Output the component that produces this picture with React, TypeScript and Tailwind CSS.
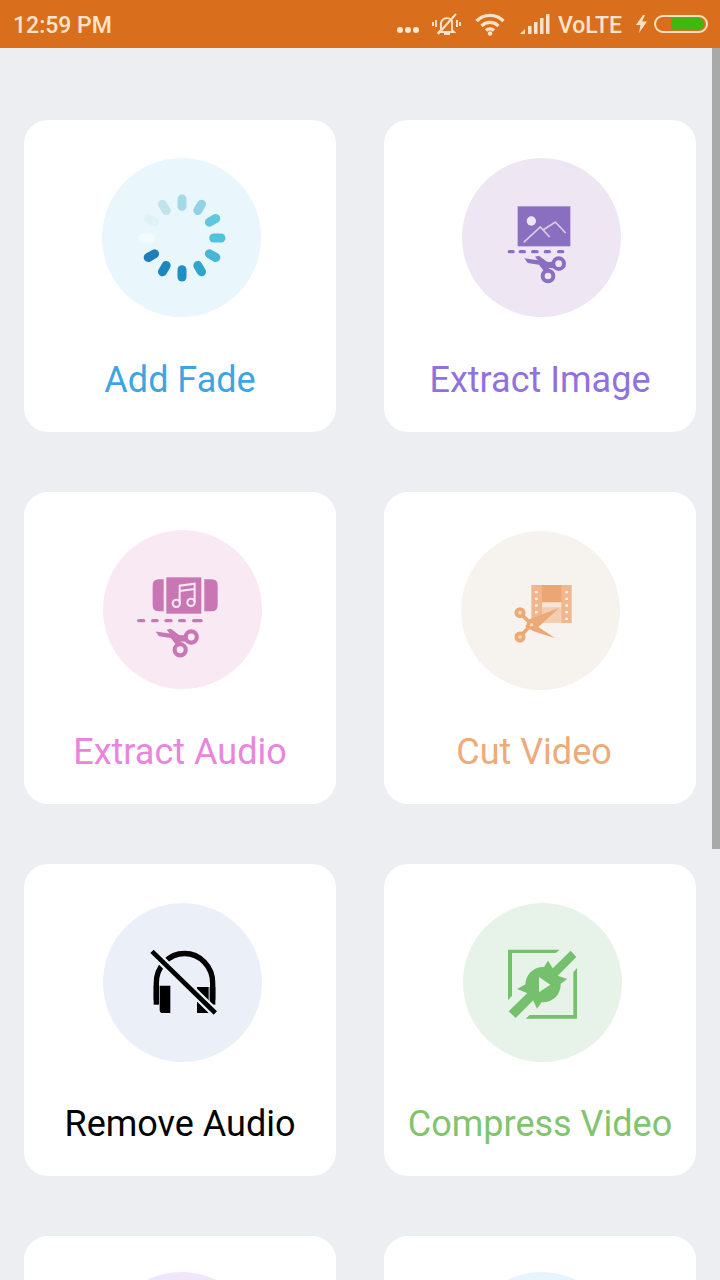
import React from 'react';

const Scissors = ({ fill, transform }: { fill: string; transform?: string }) => (
  <g transform={transform} fill={fill} stroke="none">
    <polygon points="192,309 250,317 272,348 253,350 236,328 202,323" />
    <polygon points="224,304 236,301 260,319 284,321 281,339 250,337" />
    <circle cx="295" cy="325" r="16" fill="none" stroke={fill} strokeWidth="12" />
    <circle cx="263" cy="362" r="16" fill="none" stroke={fill} strokeWidth="12" />
  </g>
);

const Dashes = ({ y, xs, color }: { y: number; xs: number[][]; color: string }) => (
  <g stroke={color} strokeWidth="10" strokeLinecap="round">
    {xs.map(([a, b]) => (
      <line key={a} x1={a} y1={y} x2={b} y2={y} />
    ))}
  </g>
);

// spokes go clockwise from 12 o'clock
const spokeColors = ['#a3dae8', '#90d4e4', '#5fc7de', '#4fc3dc', '#48b7d7', '#2ea6cc', '#1f8fc5', '#1e86bf', '#1f7dbb', '#f3fbfe', '#e1f2f6', '#c0e4eb'];

const FadeIcon = () => (
  <svg viewBox="5 10 477 477" className="w-full h-full">
    {spokeColors.map((c, i) => (
      <line key={i} x1="245" y1="155" x2="245" y2="133" stroke={c} strokeWidth="27" strokeLinecap="round" transform={`rotate(${i * 30} 245 250)`} />
    ))}
  </svg>
);

const ImageIcon = () => (
  <svg viewBox="5 8 477 477" className="w-full h-full">
    <rect x="172" y="153" width="158" height="120" fill="#8a6fc0" />
    <circle cx="213" cy="197" r="14" fill="#efe6f5" />
    <path d="M190 261 L240 215 L268 245 M248 224 L285 200 L316 233" fill="none" stroke="#d9cdea" strokeWidth="5" />
    <Dashes y={289} color="#8a6fc0" xs={[[147, 158], [180, 192], [217, 230], [255, 267], [295, 307]]} />
    <Scissors fill="#8a6fc0" />
  </svg>
);

const AudioIcon = () => (
  <svg viewBox="8 5 477 477" className="w-full h-full">
    <rect x="198" y="147" width="105" height="109" fill="#c877b4" />
    <path d="M190 153 H175 Q157 153 157 172 V230 Q157 249 175 249 H190 Z" fill="#c877b4" />
    <path d="M312 153 H334 Q352 153 352 172 V230 Q352 249 334 249 H312 Z" fill="#c877b4" />
    <g fill="none" stroke="#f8e8f3" strokeWidth="6">
      <circle cx="228" cy="225" r="11" />
      <circle cx="272" cy="222" r="11" />
      <path d="M238 225 V172 L283 166 V222 M238 188 L283 182" />
    </g>
    <Dashes y={277} color="#c877b4" xs={[[115, 130], [157, 170], [197, 212], [238, 252], [280, 302]]} />
    <Scissors fill="#c877b4" transform="translate(-34 -12) scale(1.04)" />
  </svg>
);

const CutIcon = () => (
  <svg viewBox="3 10 477 477" className="w-full h-full">
    <rect x="214" y="172" width="121" height="114" fill="#f0b68c" />
    <rect x="246" y="172" width="58" height="52" fill="#eca674" />
    <rect x="246" y="224" width="58" height="16" fill="#f7e6d8" />
    <rect x="246" y="240" width="58" height="46" fill="#f5cdb0" />
    <g fill="#f6f2ee">
      {[190, 210, 230, 250, 270].map((y) => (
        <React.Fragment key={y}>
          <rect x="225" y={y} width="8" height="7" />
          <rect x="316" y={y} width="8" height="7" />
        </React.Fragment>
      ))}
    </g>
    <polygon points="205,276 298,240 235,298 286,332 225,312 196,298" fill="#eda877" />
    <g fill="#f9d9a8" stroke="#eda877" strokeWidth="11">
      <circle cx="180" cy="255" r="11" />
      <circle cx="180" cy="328" r="11" />
    </g>
    <path d="M188 264 L215 290 L188 318" fill="none" stroke="#eda877" strokeWidth="11" />
    <circle cx="215" cy="291" r="5" fill="#f9d9a8" />
  </svg>
);

const HeadphonesIcon = () => (
  <svg viewBox="8 10 477 477" className="w-full h-full">
    <path d="M168 300 V250 A84 88 0 0 1 337 250 V300" fill="none" stroke="#000" strokeWidth="16" />
    <path d="M160 258 H176 V315 H160 Z" fill="#000" />
    <path d="M178 258 H210 V340 H187 Q178 340 178 330 Z" fill="#000" />
    <path d="M290 262 H325 V340 H290 Z" fill="#000" />
    <path d="M328 262 H345 V315 H328 Z" fill="#000" />
    <line x1="155" y1="155" x2="345" y2="340" stroke="#ebf0f8" strokeWidth="28" />
    <line x1="155" y1="155" x2="345" y2="340" stroke="#000" strokeWidth="14" />
  </svg>
);

const CompressIcon = () => (
  <svg viewBox="10 10 477 477" className="w-full h-full">
    <g fill="#75c06c">
      <polygon points="145,150 300,150 288,160 157,160 157,288 145,302" />
      <polygon points="352,205 352,357 198,357 210,346 341,346 341,218" />
      <polygon points="333,153 350,172 168,355 147,335" />
      <circle cx="250" cy="255" r="53" />
      <polygon points="265,183 245,215 285,215" />
      <polygon points="323,238 285,225 285,265" />
      <polygon points="172,268 215,245 215,285" />
      <polygon points="232,327 215,290 255,295" />
    </g>
    <polygon points="238,232 272,255 238,278" fill="#e7f3e8" />
  </svg>
);

const tools = [
  { label: 'Add Fade', color: 'text-[#3ea5e4]', bg: 'bg-[#e9f6fc]', pos: 'ml-[78px] mt-[38px]', Icon: FadeIcon },
  { label: 'Extract Image', color: 'text-[#9072df]', bg: 'bg-[#efe6f4]', pos: 'ml-[78px] mt-[38px]', Icon: ImageIcon },
  { label: 'Extract Audio', color: 'text-[#ea84dd]', bg: 'bg-[#f9e9f3]', pos: 'ml-[79px] mt-[38px]', Icon: AudioIcon },
  { label: 'Cut Video', color: 'text-[#eeaa78] -translate-x-[6px]', bg: 'bg-[#f6f2ee]', pos: 'ml-[77px] mt-[39px]', Icon: CutIcon },
  { label: 'Remove Audio', color: 'text-black', bg: 'bg-[#ebf0f8]', pos: 'ml-[79px] mt-[39px]', Icon: HeadphonesIcon },
  { label: 'Compress Video', color: 'text-[#82c46e]', bg: 'bg-[#e7f3e8]', pos: 'ml-[79px] mt-[39px]', Icon: CompressIcon },
  { label: '', color: '', bg: 'bg-[#f0e6fa]', pos: 'ml-[78px] mt-[36px]', Icon: null },
  { label: '', color: '', bg: 'bg-[#e6f5fc]', pos: 'ml-[78px] mt-[36px]', Icon: null },
];

const StatusBar = () => (
  <div className="h-12 bg-[#d96f1c] flex items-center pl-[13px] text-[#fbe3cc] font-medium" style={{ fontFamily: 'Roboto, sans-serif' }}>
    <span className="text-[23px] leading-none mt-[2px]">12:59 PM</span>
    <div className="ml-auto flex items-center">
      <svg width="24" height="8" viewBox="0 0 24 8" className="mt-[12px]">
        <g fill="#fde6d0">
          <circle cx="4" cy="4" r="3" />
          <circle cx="12" cy="4" r="3" />
          <circle cx="20" cy="4" r="3" />
        </g>
      </svg>
      <svg width="30" height="24" viewBox="0 0 30 24" className="ml-[12px]">
        <g fill="none" stroke="#fde2c7" strokeWidth="1.9">
          <path d="M9 18 V11 A6 6 0 0 1 20 9 V18 L22 20 H7 Z" />
          <path d="M4 8 V15 M1 10 V14 M25 8 V15 M28 10 V14" />
          <path d="M6 22 L24 2" strokeWidth="2" />
          <path d="M12 22 H18" />
        </g>
      </svg>
      <svg width="30" height="23" viewBox="0 0 30 23" className="ml-[13px]">
        <g fill="none" stroke="#fde2c7" strokeWidth="3.2">
          <path d="M1.5 8 A19 19 0 0 1 28.5 8" />
          <path d="M6.5 13 A12 12 0 0 1 23.5 13" />
          <path d="M11 17.5 A6 6 0 0 1 19 17.5" />
        </g>
        <circle cx="15" cy="20.5" r="2.2" fill="#fde2c7" />
      </svg>
      <svg width="30" height="20" viewBox="0 0 30 20" className="ml-[15px]">
        <g fill="#fde2c7">
          <polygon points="0,20 5,15 5,20" />
          <rect x="8" y="12" width="3.5" height="8" />
          <rect x="14" y="8" width="3.5" height="12" />
          <rect x="20" y="4" width="3.5" height="16" />
          <rect x="26" y="0" width="3.5" height="20" />
        </g>
      </svg>
      <span className="ml-[8px] text-[23px] leading-none mt-[2px]">VoLTE</span>
      <svg width="11" height="18" viewBox="0 0 11 18" className="ml-[14px]">
        <polygon points="7,0 0,10 4.5,10 3,18 11,6.5 6,6.5 9,0" fill="#fde2c7" />
      </svg>
      <div className="ml-[7px] mr-[12px] w-[54px] h-[18px] rounded-full border-2 border-[#fde2c7] flex items-center justify-end pr-[2px]">
        <div className="w-[33px] h-[12px] rounded-r-full bg-[#41b80f]" />
      </div>
    </div>
  </div>
);

const App = () => {
  return (
    <div className="relative w-[720px] h-[1280px] overflow-hidden bg-[#eceef2]" style={{ fontFamily: 'Roboto, sans-serif' }}>
      <StatusBar />
      <div className="grid grid-cols-[312px_312px] gap-x-12 gap-y-[60px] pt-[72px] pl-6">
        {tools.map(({ label, color, bg, pos, Icon }, i) => (
          <div key={i} className="w-[312px] h-[312px] bg-white rounded-[24px] flex flex-col">
            <div className="h-[240px] flex flex-col">
              <div className={`w-[159px] h-[159px] rounded-full ${bg} ${pos}`}>{Icon && <Icon />}</div>
            </div>
            <div className={`text-center text-[36px] leading-10 ${color}`}>{label}</div>
          </div>
        ))}
      </div>
      {/* scrollbar thumb sits over the page */}
      <div className="absolute right-0 top-12 w-2 h-[801px] bg-[#a9a9a9]" />
    </div>
  );
};

export default App;
